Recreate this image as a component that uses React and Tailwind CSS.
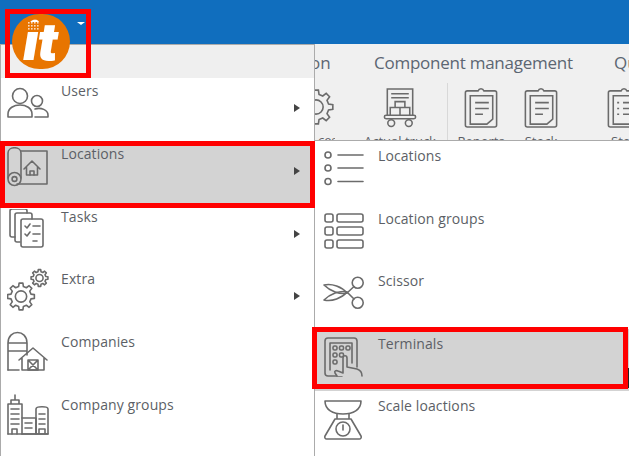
const font = { fontFamily: '"Open Sans", "Noto Sans", sans-serif' };

function Icon({ children, className = "" }) {
  return (
    <svg
      viewBox="0 0 44 44"
      fill="none"
      stroke="#6b6b6b"
      strokeWidth="1.6"
      strokeLinecap="round"
      strokeLinejoin="round"
      className={"w-[44px] h-[44px] shrink-0 " + className}
    >
      {children}
    </svg>
  );
}

const UsersIcon = () => (
  <Icon>
    <circle cx="13" cy="10" r="7.5" />
    <path d="M1 31v-3c0-6 6-9 12-9s12 3 12 9v3z" />
    <circle cx="30" cy="15" r="5.5" />
    <path d="M28 23c6-2 13 1 13 6v2H28" />
  </Icon>
);

const PlanIcon = () => (
  <Icon>
    <path d="M1 31V6c0-7 13-7 13 0v25" />
    <circle cx="7.5" cy="32" r="6.5" />
    <circle cx="7.5" cy="32" r="2.4" />
    <path d="M14 4h26v33H10" />
    <path d="M17 22l8-8 8 8M19.5 20.5V28h11v-7.5" />
    <path d="M23 28v-4h4v4" />
  </Icon>
);

const TasksIcon = () => (
  <Icon>
    <path d="M8 28H5a2 2 0 0 1-2-2V2a2 2 0 0 1 2-2h13a2 2 0 0 1 2 2v2" />
    <path d="M13 33h-3a2 2 0 0 1-2-2V6a2 2 0 0 1 2-2h13a2 2 0 0 1 2 2v4" />
    <rect x="14" y="10" width="22" height="28" rx="2" />
    <path d="M18 17l2 2 3-4M26 17h7M18 25l2 2 3-4M26 25h7M26 32h4" />
  </Icon>
);

// outline of a cog with a hole in the middle
const gearPath = (cx, cy, r, teeth = 8) => {
  const inner = r * 0.76;
  const pt = (rad, a) => `${(cx + rad * Math.cos(a)).toFixed(2)} ${(cy + rad * Math.sin(a)).toFixed(2)}`;
  const step = (Math.PI * 2) / teeth;
  let d = "";
  for (let i = 0; i < teeth; i++) {
    const a = i * step - Math.PI / 2;
    d += `${i ? "L" : "M"}${pt(inner, a - step * 0.3)} L${pt(r, a - step * 0.18)} L${pt(r, a + step * 0.18)} L${pt(inner, a + step * 0.3)} `;
  }
  return d + "Z";
};

const Gear = ({ cx, cy, r }) => (
  <g>
    <path d={gearPath(cx, cy, r)} />
    <circle cx={cx} cy={cy} r={r * 0.42} />
  </g>
);

const ExtraIcon = () => (
  <Icon>
    <Gear cx={32.5} cy={10} r={8.5} />
    <Gear cx={14} cy={28.5} r={13.5} />
  </Icon>
);

const BarnIcon = () => (
  <Icon>
    <path d="M1 39V12C1-2 20-2 20 12v12M1 12h19M1 20h19" />
    <path d="M1 39h11M12 29l14-12 14 12M15 27v12h22V27" />
    <path d="M21 29h10v10H21zM21 29l10 10M31 29L21 39" />
  </Icon>
);

const BuildingsIcon = () => (
  <Icon>
    <path d="M1 40V10h14v30M4 10V6h8v4M8 6V1" />
    <path d="M4 15h8M4 20h8M4 25h8M4 30h8" />
    <path d="M5 40v-5h5v5" />
    <path d="M15 24h14v16H15M18 29h7M18 34h7" />
    <path d="M29 40V15c0-3 12-3 12 0v25zM32 20h6M32 25h6M32 30h6M32 40v-5h6v5" />
    <path d="M1 40h40" />
  </Icon>
);

const ListIcon = () => (
  <Icon>
    <circle cx="6" cy="6" r="3" />
    <circle cx="6" cy="19" r="3" />
    <circle cx="6" cy="32.5" r="3" />
    <path d="M16 6h25M16 19h25M16 32.5h25" />
  </Icon>
);

const GroupsIcon = () => (
  <Icon>
    <rect x="3" y="2" width="8" height="8" rx="2" />
    <rect x="3" y="15" width="8" height="8" rx="2" />
    <rect x="3" y="28" width="8" height="8" rx="2" />
    <rect x="15" y="2" width="26" height="8" rx="2" />
    <rect x="15" y="15" width="26" height="8" rx="2" />
    <rect x="15" y="28" width="26" height="8" rx="2" />
  </Icon>
);

const ScissorIcon = () => (
  <Icon>
    <circle cx="35.7" cy="8.7" r="5.5" />
    <circle cx="35.7" cy="28.7" r="5.5" />
    <path d="M2 11c8-2 18 2 23 8-7 2-17-2-23-8z" />
    <path d="M2 26c8 2 18-2 23-8-7-2-17 2-23 8z" />
    <path d="M25 19l7-6.500M25 18l7 7" />
  </Icon>
);

const TerminalIcon = () => (
  <Icon>
    <path d="M20 39H6a3 3 0 0 1-3-3V4a3 3 0 0 1 3-3h26a3 3 0 0 1 3 3v26" />
    <path d="M8 33V6h22v20" />
    <rect x="11" y="9" width="4" height="4" rx="1.500" />
    <rect x="17.500" y="9" width="4" height="4" rx="1.500" />
    <rect x="24" y="9" width="4" height="4" rx="1.500" />
    <rect x="11" y="16" width="4" height="4" rx="1.500" />
    <rect x="17.500" y="16" width="4" height="4" rx="1.500" />
    <rect x="11" y="23" width="4" height="4" rx="1.500" />
    <path d="M15 39l-2-3c-1-2 1-3 3-2l5 2V21c0-3 4-3 4 0v9l10 2c3 1 5 3 5 7" fill="#d3d3d3" />
  </Icon>
);

const ScaleIcon = () => (
  <Icon>
    <path d="M3 2h36c0 9-8 13-18 13S3 11 3 2z" />
    <path d="M15 15v5h12v-5M13 20h16l10 17a2 2 0 0 1-2 3H5a2 2 0 0 1-2-3z" />
    <circle cx="21" cy="30" r="7" />
    <path d="M21 26v5" />
  </Icon>
);

const ClipboardIcon = ({ list = false }) => (
  <svg viewBox="0 0 36 42" fill="none" stroke="#6b6b6b" strokeWidth="1.6" className="w-[36px] h-[41px] shrink-0">
    <path d="M12 4h3c1-3 5-3 6 0h11a2 2 0 0 1 2 2v33a2 2 0 0 1-2 2H4a2 2 0 0 1-2-2V6a2 2 0 0 1 2-2h8z" />
    <path d="M7 9h23v24l-6 5H7z" />
    {list ? (
      <path d="M11 16h2M17 16h10M11 22h2M17 22h10M11 28h2M17 28h10" />
    ) : (
      <path d="M12 16h14M12 22h14M12 28h8" />
    )}
  </svg>
);

const TruckIcon = () => (
  <svg viewBox="0 0 34 42" fill="none" stroke="#6b6b6b" strokeWidth="1.6" className="w-[34px] h-[41px] shrink-0">
    <path d="M4 29V2h26v27M8 7h18M8 11h18" />
    <path d="M12 21v-6h10v6M7 29v-8h10v8M17 21h10v8" />
    <rect x="1" y="29" width="32" height="3.500" rx="1.700" />
    <circle cx="8" cy="37" r="3.500" />
    <circle cx="26" cy="37" r="3.500" />
  </svg>
);

const RibbonGear = () => (
  <svg viewBox="0 0 44 44" fill="none" stroke="#6b6b6b" strokeWidth="1.6" className="w-[44px] h-[44px]">
    <Gear cx={22} cy={22} r={17} />
  </svg>
);

function MenuRow({ icon, label, arrow, active, iconTop = "pt-[8px]" }) {
  return (
    <div className={"h-[62.8px] flex items-start pl-[6px] pr-[14px] " + (active ? "bg-[#d3d3d3]" : "bg-white")}>
      <div className={"w-[54px] shrink-0 " + iconTop}>{icon}</div>
      <span className="mt-[3px] text-[14px] leading-[19px] tracking-[0.1px] text-[#5c5f66]">{label}</span>
      {arrow && <span className="ml-auto mt-[26px] w-0 h-0 border-y-[4px] border-y-transparent border-l-[6px] border-l-[#444444]" />}
    </div>
  );
}

function SubRow({ icon, label, active }) {
  return (
    <div className={"h-[62.5px] flex items-start pl-[7px] " + (active ? "bg-[#d3d3d3]" : "bg-white")}>
      <div className="w-[56px] shrink-0 pt-[8px]">{icon}</div>
      <span className="mt-[5px] text-[14px] leading-[19px] tracking-[0.1px] text-[#5c5f66]">{label}</span>
    </div>
  );
}

function RibbonTool({ icon, label, width }) {
  return (
    <div className={"flex flex-col items-center shrink-0 " + width}>
      <div className="h-[47px] pt-[1px]">{icon}</div>
      <span className="text-[13px] leading-[16px] text-[#5c5f66] whitespace-nowrap">{label}</span>
    </div>
  );
}

export default function App() {
  return (
    <div className="relative w-[629px] h-[456px] overflow-hidden bg-[#f0f0f0]" style={font}>
      <div className="h-[44px] bg-[#106ebe]" />

      {/* ribbon behind the menus, its labels cut by the submenu */}
      <div className="h-[96px] overflow-hidden pl-[310px] whitespace-nowrap">
        <div className="flex h-[37px] items-center text-[17px] text-[#5c6672]">
          <span className="w-[64px] shrink-0">on</span>
          <span className="w-[240px] shrink-0 tracking-[-0.25px]">Component management</span>
          <span className="shrink-0">Qu</span>
        </div>
        <div className="flex items-start mt-[5px]">
          <div className="w-[25px] h-[60px] overflow-hidden shrink-0">
            <div className="-ml-[16px] -mt-[1px] h-[47px]">
              <RibbonGear />
            </div>
            <span className="block pl-[8px] text-[13px] leading-[16px] text-[#5c5f66]">ces</span>
          </div>
          <RibbonTool icon={<TruckIcon />} label="Actual truck" width="w-[94px] ml-[18px]" />
          <div className="w-px h-[57px] -mt-[3px] bg-[#d8d8d8] shrink-0" />
          <RibbonTool icon={<ClipboardIcon />} label="Reports" width="w-[64px] ml-[1px]" />
          <RibbonTool icon={<ClipboardIcon />} label="Stock" width="w-[46px] ml-[5px]" />
          <RibbonTool icon={<ClipboardIcon list />} label="Stoc" width="w-[36px] ml-[42px]" />
        </div>
      </div>

      {/* main menu */}
      <div className="absolute left-0 top-[44px] w-[315px] h-[412px] border-x border-t border-[#ababab] bg-white">
        <div className="h-[33px] bg-[#efefef]" />
        <MenuRow icon={<UsersIcon />} label="Users" arrow />
        <MenuRow icon={<PlanIcon />} label="Locations" arrow active iconTop="pt-[6px]" />
        <MenuRow icon={<TasksIcon />} label="Tasks" arrow iconTop="pt-[5px]" />
        <MenuRow icon={<ExtraIcon />} label="Extra" arrow iconTop="pt-[2px]" />
        <MenuRow icon={<BarnIcon />} label="Companies" iconTop="pt-[2px]" />
        <MenuRow icon={<BuildingsIcon />} label="Company groups" iconTop="pt-[2px]" />
      </div>

      {/* locations submenu */}
      <div className="absolute left-[314px] top-[140px] w-[315px] h-[316px] border-l border-t border-[#ababab] bg-white">
        <SubRow icon={<ListIcon />} label="Locations" />
        <SubRow icon={<GroupsIcon />} label="Location groups" />
        <SubRow icon={<ScissorIcon />} label="Scissor" />
        <SubRow icon={<TerminalIcon />} label="Terminals" active />
        <SubRow icon={<ScaleIcon />} label="Scale loactions" />
      </div>

      {/* logo */}
      <div className="absolute left-[12px] top-[14px] w-[58px] h-[55px] rounded-full bg-[#e87500] flex items-center justify-center">
        <span className="text-white italic font-black text-[52px] leading-[46px] tracking-[-1px] -ml-[2px]" style={{ fontFamily: "Inter, sans-serif" }}>
          it
        </span>
        <svg viewBox="0 0 12 10" className="absolute left-[16px] top-[8px] w-[12px] h-[10px] bg-[#e87500]" fill="#f8dcc0">
          {[0, 3, 6, 9].map((x) => [0, 3, 6].map((y) => <rect key={`${x}-${y}`} x={x} y={y} width="1.600" height="1.600" />))}
        </svg>
      </div>
      <span className="absolute left-[77px] top-[22px] w-0 h-0 border-x-[4px] border-x-transparent border-t-[3px] border-t-white" />

      {/* red highlight boxes */}
      <div className="absolute left-[5px] top-[9px] w-[86px] h-[69px] border-[5px] border-[#ff0000]" />
      <div className="absolute left-0 top-[141px] w-[315px] h-[67px] border-[5px] border-[#ff0000]" />
      <div className="absolute left-[312px] top-[327px] w-[316px] h-[62px] border-[5px] border-[#ff0000]" />
      <div className="absolute left-[628px] top-[368px] w-px h-[20px] bg-[#222222]" />
    </div>
  );
}
